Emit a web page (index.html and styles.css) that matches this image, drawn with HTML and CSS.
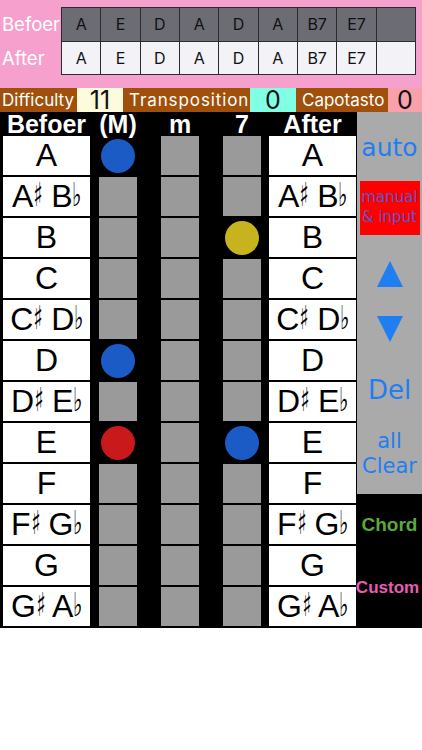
FILE: index.html
```html
<!DOCTYPE html>
<html>
<head>
<meta charset="utf-8">
<link rel="stylesheet" href="styles.css">
</head>
<body>
<div class="top">
  <div class="labels">
    <div class="lab">Befoer</div>
    <div class="lab">After</div>
  </div>
  <div class="prog">
    <div class="pc dk">A</div><div class="pc dk">E</div><div class="pc dk">D</div><div class="pc dk">A</div><div class="pc dk">D</div><div class="pc dk">A</div><div class="pc dk">B7</div><div class="pc dk">E7</div><div class="pc dk"></div>
    <div class="pc lt">A</div><div class="pc lt">E</div><div class="pc lt">D</div><div class="pc lt">A</div><div class="pc lt">D</div><div class="pc lt">A</div><div class="pc lt">B7</div><div class="pc lt">E7</div><div class="pc lt"></div>
  </div>
</div>
<div class="info">
  <div class="il w-diff">Difficulty</div>
  <div class="iv yel">11</div>
  <div class="il w-trans">Transposition</div>
  <div class="iv cyan">0</div>
  <div class="il w-capo">Capotasto</div>
  <div class="iv pinkb">0</div>
</div>
<div class="main">
  <div class="grid">
    <div class="hd c1">Befoer</div><div class="hd cs">(M)</div><div class="hd cs">m</div><div class="hd cs">7</div><div class="hd c5">After</div>

    <div class="note c1">A</div><div class="cs on"><span class="dot blue"></span></div><div class="cs sq"></div><div class="cs sq"></div><div class="note c5">A</div>
    <div class="note c1">A<span class="acc">♯</span> B<span class="acc">♭</span></div><div class="cs sq"></div><div class="cs sq"></div><div class="cs sq"></div><div class="note c5">A<span class="acc">♯</span> B<span class="acc">♭</span></div>
    <div class="note c1">B</div><div class="cs sq"></div><div class="cs sq"></div><div class="cs on"><span class="dot yellow"></span></div><div class="note c5">B</div>
    <div class="note c1">C</div><div class="cs sq"></div><div class="cs sq"></div><div class="cs sq"></div><div class="note c5">C</div>
    <div class="note c1">C<span class="acc">♯</span> D<span class="acc">♭</span></div><div class="cs sq"></div><div class="cs sq"></div><div class="cs sq"></div><div class="note c5">C<span class="acc">♯</span> D<span class="acc">♭</span></div>
    <div class="note c1">D</div><div class="cs on"><span class="dot blue"></span></div><div class="cs sq"></div><div class="cs sq"></div><div class="note c5">D</div>
    <div class="note c1">D<span class="acc">♯</span> E<span class="acc">♭</span></div><div class="cs sq"></div><div class="cs sq"></div><div class="cs sq"></div><div class="note c5">D<span class="acc">♯</span> E<span class="acc">♭</span></div>
    <div class="note c1">E</div><div class="cs on"><span class="dot red"></span></div><div class="cs sq"></div><div class="cs on"><span class="dot blue"></span></div><div class="note c5">E</div>
    <div class="note c1">F</div><div class="cs sq"></div><div class="cs sq"></div><div class="cs sq"></div><div class="note c5">F</div>
    <div class="note c1">F<span class="acc">♯</span> G<span class="acc">♭</span></div><div class="cs sq"></div><div class="cs sq"></div><div class="cs sq"></div><div class="note c5">F<span class="acc">♯</span> G<span class="acc">♭</span></div>
    <div class="note c1">G</div><div class="cs sq"></div><div class="cs sq"></div><div class="cs sq"></div><div class="note c5">G</div>
    <div class="note c1">G<span class="acc">♯</span> A<span class="acc">♭</span></div><div class="cs sq"></div><div class="cs sq"></div><div class="cs sq"></div><div class="note c5">G<span class="acc">♯</span> A<span class="acc">♭</span></div>
  </div>
  <div class="side">
    <div class="gray">
      <div class="auto">auto</div>
      <div class="manual">manual<br>&amp; input</div>
      <svg class="arrow up" width="26" height="26" viewBox="0 0 26 26"><polygon points="13,0 26,26 0,26" fill="#1f7ef2"/></svg>
      <svg class="arrow down" width="26" height="26" viewBox="0 0 26 26"><polygon points="0,0 26,0 13,26" fill="#1f7ef2"/></svg>
      <div class="del">Del</div>
      <div class="clear">all<br>Clear</div>
    </div>
    <div class="blk">
      <div class="chord">Chord</div>
      <div class="custom">Custom</div>
    </div>
  </div>
</div>
</body>
</html>
```
FILE: styles.css
```css
html, body { margin: 0; padding: 0; background: #fff; }
body { width: 422px; font-family: Inter, "Liberation Sans", sans-serif; }

.top {
  background: #f5a0cd;
  height: 88px;
  box-sizing: border-box;
  padding-top: 7px;
  display: flex;
}
.labels { width: 61px; display: flex; flex-direction: column; }
.lab {
  height: 34px; line-height: 34px;
  color: #fff; font-size: 18.5px; padding-left: 2px; white-space: nowrap;
}
.prog {
  width: 355px; height: 68px; box-sizing: border-box;
  display: grid;
  grid-template-columns: repeat(9, 1fr);
  grid-template-rows: 1fr 1fr;
  gap: 1px; padding: 1px;
  background: #2b2b2e;
}
.pc { display: flex; align-items: center; justify-content: center; font-size: 16px; color: #111; }
.dk { background: #6c6c74; }
.lt { background: #f2f2f7; }

.info { display: flex; height: 24px; background: #a1500b; }
.il { color: #fff; font-size: 17px; line-height: 24px; padding-left: 2px; white-space: nowrap; box-sizing: border-box; }
.w-diff { width: 77px; }
.w-trans { width: 127px; padding-left: 6px; letter-spacing: 0.9px; }
.w-capo { width: 92px; padding-left: 6px; }
.iv { font-size: 25px; line-height: 24px; text-align: center; color: #111; }
.yel { width: 46px; background: #fefbdc; }
.cyan { width: 46px; background: #80ffe4; }
.pinkb { width: 34px; background: #f9a1aa; }

.main { display: flex; }
.grid {
  width: 357px; background: #000; box-sizing: border-box;
  padding: 0 0 2px 3px;
  display: grid;
  grid-template-columns: 87px 47px 62px 62px 96px;
  grid-template-rows: 22px repeat(12, 39px);
  row-gap: 2px;
}
.hd {
  color: #fff; font-family: "Liberation Sans", Arial, sans-serif; font-weight: bold;
  font-size: 25px; line-height: 25px; text-align: center; white-space: nowrap;
}
.c1 { width: 87px; }
.c5 { width: 87px; justify-self: end; margin-right: 1px; }
.cs { width: 38px; justify-self: end; display: flex; align-items: center; justify-content: center; }
.hd.cs { display: block; overflow: visible; }
.sq { background: #9a9a9a; }
.note {
  background: #fff; color: #000;
  font-family: "Liberation Sans", Arial, sans-serif; font-size: 32px;
  line-height: 39px; height: 39px; text-align: center; white-space: nowrap;
}
.acc {
  font-family: "DejaVu Sans", sans-serif; font-size: 33px;
  display: inline-block; line-height: 20px; vertical-align: 1px;
  transform: scaleX(0.6); margin: 0 -4px 0 -3px;
}
.dot { width: 34px; height: 34px; border-radius: 50%; display: block; }
.blue { background: #1a5bc6; }
.red { background: #c9191b; }
.yellow { background: #c6b31d; }

.side { width: 65px; display: flex; flex-direction: column; }
.gray { background: #aaaaaa; height: 382px; display: flex; flex-direction: column; align-items: center; font-family: "DejaVu Sans", sans-serif; color: #1f7ef2; }
.auto { margin-top: 16px; height: 40px; line-height: 40px; font-size: 25px; }
.manual {
  margin-top: 13px; width: 60px; height: 54px; box-sizing: border-box; padding-top: 6px;
  background: #fe0000; color: #5a55c8; font-size: 15px; line-height: 20px; text-align: center; white-space: nowrap;
}
.arrow { display: block; }
.up { margin-top: 26px; }
.down { margin-top: 29px; }
.del { margin-top: 28px; height: 40px; line-height: 40px; font-size: 26px; }
.clear { margin-top: 19px; font-size: 21px; line-height: 25px; text-align: center; }
.blk { background: #000; height: 134px; display: flex; flex-direction: column; align-items: center; font-family: "Liberation Sans", Arial, sans-serif; font-weight: bold; }
.chord { margin-top: 20px; height: 22px; line-height: 22px; font-size: 19px; color: #5ca83f; }
.custom { margin-top: 41px; height: 22px; line-height: 22px; font-size: 17px; color: #e85cb6; margin-left: -4px; white-space: nowrap; }
```
